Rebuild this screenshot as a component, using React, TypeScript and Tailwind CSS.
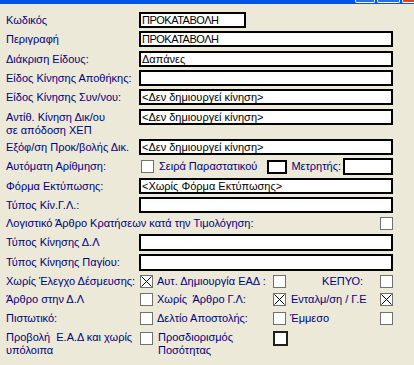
import React from 'react';

const labelCls = 'w-[133px] shrink-0 text-[#000080] text-[11px] leading-[13px] whitespace-nowrap';
const textCls = 'text-[#000080] text-[11px] leading-[13px] whitespace-nowrap';

function Field({ value = '', className = 'w-[254px] h-[16px]', tight = false }: { value?: string; className?: string; tight?: boolean }) {
  return (
    <div
      className={`${className} bg-white border-2 border-black text-black text-[11px] leading-[12px] pl-[1px] overflow-hidden whitespace-nowrap ${tight ? 'tracking-[-0.5px]' : ''}`}
    >
      {value}
    </div>
  );
}

function Check({ checked = false }: { checked?: boolean }) {
  return (
    <div className="w-[13px] h-[13px] shrink-0 bg-white border border-[#707070] relative">
      {checked && (
        <svg viewBox="0 0 11 11" className="absolute inset-0 w-[11px] h-[11px]">
          <path d="M0.5 0.5 L10.5 10.5 M10.5 0.5 L0.5 10.5" stroke="#000" strokeWidth="1" />
        </svg>
      )}
    </div>
  );
}

export default function App() {
  return (
    <div className="w-[414px] h-[365px] bg-[#ECE9D8] font-['Liberation_Sans',Arial,sans-serif] overflow-hidden">
      {/* title bar remnant */}
      <div className="h-[4px] bg-[#0055E5] flex justify-end items-start">
        <div className="w-[20px] h-[3px] border-x border-b border-white rounded-b-[2px] bg-[#2a6cf0] mr-[2px]" />
        <div className="w-[23px] h-[3px] border-x border-b border-white rounded-b-[2px] bg-[#2a6cf0] mr-[2px]" />
        <div className="w-[12px] h-[3px] border-l border-b border-white rounded-bl-[2px] bg-[#d9452a]" />
      </div>

      <div className="pl-[6px] w-[393px] flex flex-col">
        <div className="mt-[8px] h-[16px] flex items-center">
          <span className={labelCls}>Κωδικός</span>
          <Field value="ΠΡΟΚΑΤΑΒΟΛΗ" className="w-[107px] h-[16px]" tight />
        </div>
        <div className="mt-[3px] h-[16px] flex items-center">
          <span className={labelCls}>Περιγραφή</span>
          <Field value="ΠΡΟΚΑΤΑΒΟΛΗ" tight />
        </div>
        <div className="mt-[4px] h-[16px] flex items-center">
          <span className={labelCls}>Διάκριση Είδους:</span>
          <Field value="Δαπάνες" />
        </div>
        <div className="mt-[3px] h-[16px] flex items-center">
          <span className={labelCls}>Είδος Κίνησης Αποθήκης:</span>
          <Field />
        </div>
        <div className="mt-[3px] h-[16px] flex items-center">
          <span className={labelCls}>Είδος Κίνησης Συν/νου:</span>
          <Field value="<Δεν δημιουργεί κίνηση>" />
        </div>
        <div className="mt-[4px] h-[28px] flex items-start">
          <span className={`${labelCls} pt-[2px]`}>
            Αντίθ. Κίνηση Δικ/ου
            <br />
            σε απόδοση ΧΕΠ
          </span>
          <Field value="<Δεν δημιουργεί κίνηση>" />
        </div>
        <div className="mt-[2px] h-[16px] flex items-center">
          <span className={labelCls}>Εξόφ/ση Προκ/βολής Δικ.</span>
          <Field value="<Δεν δημιουργεί κίνηση>" />
        </div>
        <div className="mt-[3px] h-[17px] flex items-center">
          <span className={labelCls}>Αυτόματη Αρίθμηση:</span>
          <div className="ml-[2px]">
            <Check />
          </div>
          <span className={`${textCls} ml-[5px] w-[108px]`}>Σειρά Παραστατικού</span>
          <div className="w-[21px] h-[14px] bg-white border-2 border-black" />
          <span className={`${textCls} ml-[4px] w-[52px]`}>Μετρητής:</span>
          <Field className="w-[50px] h-[17px]" />
        </div>
        <div className="mt-[3px] h-[16px] flex items-center">
          <span className={labelCls}>Φόρμα Εκτύπωσης:</span>
          <Field value="<Χωρίς Φόρμα Εκτύπωσης>" />
        </div>
        <div className="mt-[3px] h-[16px] flex items-center">
          <span className={labelCls}>Τύπος Κίν.Γ.Λ.:</span>
          <Field />
        </div>
        <div className="mt-[4px] h-[13px] flex items-center justify-between">
          <span className={textCls}>Λογιστικό Άρθρο Κρατήσεων κατά την Τιμολόγηση:</span>
          <Check />
        </div>
        <div className="mt-[4px] h-[17px] flex items-center">
          <span className={labelCls}>Τύπος Κίνησης Δ.Λ</span>
          <Field className="w-[254px] h-[17px]" />
        </div>
        <div className="mt-[3px] h-[17px] flex items-center">
          <span className={labelCls}>Τύπος Κίνησης Παγίου:</span>
          <Field className="w-[254px] h-[17px]" />
        </div>

        {/* checkbox grid */}
        <div className="mt-[4px] h-[13px] flex items-center">
          <span className={`${labelCls} w-[134px]`}>Χωρίς Έλεγχο Δέσμευσης:</span>
          <Check checked />
          <span className={`${textCls} ml-[4px] w-[116px]`}>Αυτ. Δημιουργία ΕΑΔ :</span>
          <Check />
          <span className={`${textCls} w-[77px] text-right`}>ΚΕΠΥΟ:</span>
          <span className="ml-[17px]">
            <Check />
          </span>
        </div>
        <div className="mt-[5px] h-[13px] flex items-center">
          <span className={`${labelCls} w-[134px]`}>Άρθρο στην Δ.Λ</span>
          <Check />
          <span className={`${textCls} ml-[4px] w-[116px]`}>Χωρίς&nbsp; Άρθρο Γ.Λ:</span>
          <Check checked />
          <span className={`${textCls} ml-[5px] w-[89px]`}>Ενταλμ/ση / Γ.Ε</span>
          <Check checked />
        </div>
        <div className="mt-[6px] h-[13px] flex items-center">
          <span className={`${labelCls} w-[134px]`}>Πιστωτικό:</span>
          <Check />
          <span className={`${textCls} ml-[4px] w-[116px]`}>Δελτίο Αποστολής:</span>
          <Check />
          <span className={`${textCls} ml-[4px] w-[90px]`}>Έμμεσο</span>
          <Check />
        </div>
        <div className="mt-[7px] flex items-start">
          <span className={`${labelCls} w-[134px] -mt-[1px]`}>
            Προβολή&nbsp; Ε.Α.Δ και χωρίς
            <br />
            υπόλοιπα
          </span>
          <Check />
          <span className={`${textCls} ml-[5px] w-[115px] -mt-[1px]`}>
            Προσδιορισμός
            <br />
            Ποσότητας
          </span>
          <div className="w-[15px] h-[15px] -mt-[1px] bg-white border-2 border-[#202020]" />
        </div>
      </div>
    </div>
  );
}
